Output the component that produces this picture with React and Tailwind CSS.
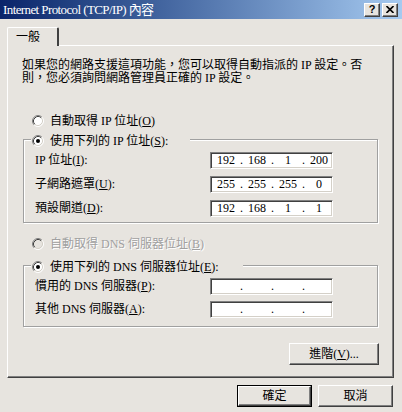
import { Fragment } from 'react'

function Radio({ checked, disabled }) {
  return (
    <svg width="12" height="12" viewBox="0 0 12 12" className="shrink-0">
      <circle cx="6" cy="6" r="5" fill={disabled ? '#e7e4df' : '#fff'} />
      <path d="M2.11 9.89 A5.5 5.5 0 0 1 9.89 2.11" fill="none" stroke="#808080" />
      <path d="M9.89 2.11 A5.5 5.5 0 0 1 2.11 9.89" fill="none" stroke="#fff" />
      <path d="M2.82 9.18 A4.5 4.5 0 0 1 9.18 2.82" fill="none" stroke="#404040" />
      <path d="M9.18 2.82 A4.5 4.5 0 0 1 2.82 9.18" fill="none" stroke="#d4d0c8" />
      {checked && <circle cx="6" cy="6" r="2" fill="#000" />}
    </svg>
  )
}

function IpField({ parts }) {
  return (
    <div className="w-[123px] h-[17px] flex items-center bg-white border border-t-[#808080] border-l-[#808080] border-r-white border-b-white shadow-[inset_1px_1px_0_#404040,inset_-1px_-1px_0_#d4d0c8] pl-[2px]">
      {parts.map((p, i) => (
        <Fragment key={i}>
          <span className="w-[26px] text-center">{p}</span>
          {i < 3 && <span className="w-[5px] text-center">.</span>}
        </Fragment>
      ))}
    </div>
  )
}

function Row({ label, parts, className = '' }) {
  return (
    <div className={`flex items-center h-[17px] ${className}`}>
      <span className="w-[175px] whitespace-nowrap">{label}</span>
      <IpField parts={parts} />
    </div>
  )
}

function Button({ children, isDefault, className = '' }) {
  return (
    <div className={`flex items-center justify-center bg-[#e7e4df] ${isDefault ? 'border border-black' : ''} ${className}`}>
      <div className="w-full h-full flex items-center justify-center border border-t-white border-l-white border-r-[#404040] border-b-[#404040] shadow-[inset_-1px_-1px_0_#808080]">
        {children}
      </div>
    </div>
  )
}

export default function App() {
  const empty = ['', '', '', '']
  return (
    <div className="w-[402px] h-[412px] bg-[#e7e4df] overflow-hidden flex flex-col text-[12px] leading-[13px] text-black font-['Liberation_Serif','Noto_Sans_CJK_TC',serif]">
      {/* Title bar */}
      <div className="h-[19px] shrink-0 flex items-center justify-between bg-linear-to-r from-[#0a246a] to-[#a6caf0] pl-[3px] pr-[4px]">
        <span className="text-white text-[13px] leading-[14px] tracking-[-0.6px] whitespace-nowrap">Internet Protocol (TCP/IP) 內容</span>
        <div className="flex gap-[2px]">
          <div className="w-[16px] h-[14px] bg-[#e7e4df] flex items-center justify-center border border-t-white border-l-white border-r-[#404040] border-b-[#404040] shadow-[inset_-1px_-1px_0_#808080] font-['Liberation_Sans',sans-serif] font-bold text-[11px] leading-[11px]">?</div>
          <div className="w-[16px] h-[14px] bg-[#e7e4df] flex items-center justify-center border border-t-white border-l-white border-r-[#404040] border-b-[#404040] shadow-[inset_-1px_-1px_0_#808080]">
            <svg width="8" height="7" viewBox="0 0 8 7">
              <path d="M0.5 0 L7.5 7 M7.5 0 L0.5 7" stroke="#000" strokeWidth="1.6" />
            </svg>
          </div>
        </div>
      </div>

      {/* Tab */}
      <div className="flex pl-[7px] pt-[8px] shrink-0">
        <div className="relative z-10 -mb-[1px] w-[52px] h-[19px] bg-[#e7e4df] rounded-t-[2px] border-t border-l border-r-2 border-t-white border-l-white border-r-[#404040] flex items-center pl-[8px]">
          一般
        </div>
      </div>

      {/* Panel */}
      <div className="ml-[7px] w-[387px] h-[333px] shrink-0 flex flex-col border border-t-white border-l-white border-r-[#404040] border-b-[#404040] shadow-[inset_-1px_-1px_0_#808080]">
        <p className="mt-[13px] pl-[14px] whitespace-nowrap">
          如果您的網路支援這項功能，您可以取得自動指派的 IP 設定。否
          <br />
          則，您必須詢問網路管理員正確的 IP 設定。
        </p>

        <div className="mt-[29px] ml-[24px] flex items-center gap-[6px] h-[14px]">
          <Radio />
          <span>自動取得 IP 位址(<u>O</u>)</span>
        </div>

        <div className="mt-[11px] ml-[15px] w-[355px] border border-[#a0a0a0] shadow-[1px_1px_0_#fff,inset_1px_1px_0_#fff] pl-[11px] pb-[5px]">
          <div className="-mt-[6px] -ml-[4px] w-[159px] h-[14px] bg-[#e7e4df] flex items-center gap-[6px] pl-[1px]">
            <Radio checked />
            <span>使用下列的 IP 位址(<u>S</u>):</span>
          </div>
          <Row className="mt-[4px]" label={<>IP 位址(<u>I</u>):</>} parts={['192', '168', '1', '200']} />
          <Row className="mt-[7px]" label={<>子網路遮罩(<u>U</u>):</>} parts={['255', '255', '255', '0']} />
          <Row className="mt-[7px]" label={<>預設閘道(<u>D</u>):</>} parts={['192', '168', '1', '1']} />
        </div>

        <div className="mt-[14px] ml-[24px] flex items-center gap-[6px] h-[14px] text-[#a0a0a0] [text-shadow:1px_1px_0_#fff]">
          <Radio disabled />
          <span>自動取得 DNS 伺服器位址(<u>B</u>)</span>
        </div>

        <div className="mt-[14px] ml-[15px] w-[355px] border border-[#a0a0a0] shadow-[1px_1px_0_#fff,inset_1px_1px_0_#fff] pl-[11px] pb-[8px]">
          <div className="-mt-[6px] -ml-[4px] w-[212px] h-[14px] bg-[#e7e4df] flex items-center gap-[6px] pl-[1px]">
            <Radio checked />
            <span>使用下列的 DNS 伺服器位址(<u>E</u>):</span>
          </div>
          <Row className="mt-[4px]" label={<>慣用的 DNS 伺服器(<u>P</u>):</>} parts={empty} />
          <Row className="mt-[6px]" label={<>其他 DNS 伺服器(<u>A</u>):</>} parts={empty} />
        </div>

        <div className="mt-[16px] flex justify-end pr-[14px]">
          <Button className="w-[90px] h-[22px]">進階(<u>V</u>)...</Button>
        </div>
      </div>

      {/* Bottom buttons */}
      <div className="mt-[7px] flex justify-end gap-[6px] pr-[9px]">
        <Button isDefault className="w-[75px] h-[22px]">確定</Button>
        <Button className="w-[75px] h-[22px]">取消</Button>
      </div>
    </div>
  )
}
